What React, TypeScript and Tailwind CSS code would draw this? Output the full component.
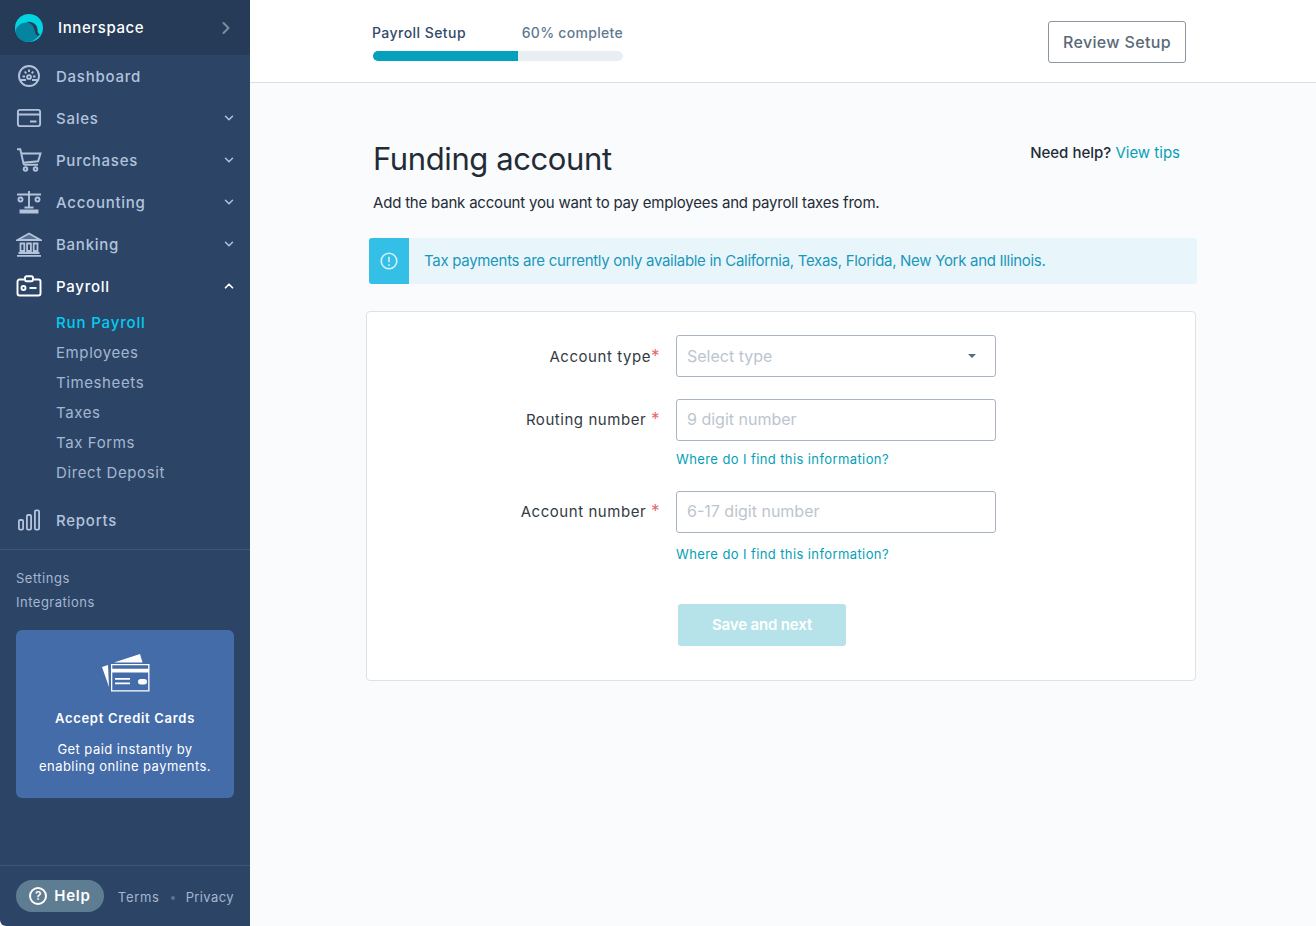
import { ChevronDown, ChevronRight, ChevronUp } from "lucide-react";
import type { ReactNode } from "react";

const DashboardIcon = () => (
  <svg width="26" height="26" viewBox="0 0 26 26" fill="none" stroke="currentColor" strokeWidth="1.9">
    <circle cx="13" cy="13" r="10" />
    <circle cx="13" cy="14" r="1.9" />
    <path d="M13 6.500v2.500M8.800 8.500l1.400 1.800M17.200 8.500l-1.400 1.800M6.500 13.500h2.500M17 13.500h2.500M4.500 17h5.500M16 17h5.500" />
  </svg>
);

const SalesIcon = () => (
  <svg width="26" height="22" viewBox="0 0 26 22" fill="none" stroke="currentColor" strokeWidth="1.9">
    <rect x="1.900" y="2.900" width="22.200" height="16.200" rx="2" />
    <path d="M2 7.500h22M14 14.500h6.500" />
  </svg>
);

const CartIcon = () => (
  <svg width="26" height="24" viewBox="0 0 26 24" fill="none" stroke="currentColor" strokeWidth="1.9">
    <path d="M1 1.200h3.300L7.500 15.500c.2 1 .8 1.300 1.500 1.300h13" />
    <path d="M5 5.500h19.500l-2.400 7.800-15 1.400" />
    <circle cx="9.500" cy="21" r="1.800" />
    <circle cx="19.500" cy="21" r="1.800" />
  </svg>
);

const ScaleIcon = () => (
  <svg width="26" height="24" viewBox="0 0 26 24" fill="none" stroke="currentColor" strokeWidth="1.9">
    <path d="M1 4.500h24M13 1v17M8.500 17.500h9M4.500 22.500V20.500h17v2z" />
    <circle cx="4.500" cy="9.500" r="2" />
    <circle cx="21.500" cy="9.500" r="2" />
  </svg>
);

const BankIcon = () => (
  <svg width="26" height="25" viewBox="0 0 26 25" fill="none" stroke="currentColor" strokeWidth="1.800">
    <path d="M1.500 8 13 1.500 24.500 8z" fill="currentColor" fillOpacity="0.35" />
    <path d="M4.500 11.500h3.800v7.500H4.500zM11.100 11.500h3.800v7.500h-3.800zM17.700 11.500h3.800v7.500h-3.800z" />
    <path d="M2.500 21h21M1 23.800h24" />
  </svg>
);

const PayrollIcon = () => (
  <svg width="26" height="22" viewBox="0 0 26 22" fill="none" stroke="currentColor" strokeWidth="1.9">
    <path d="M8.500 4.500H3.500a2 2 0 0 0-2 2v12a2 2 0 0 0 2 2h19a2 2 0 0 0 2-2v-12a2 2 0 0 0-2-2H17.500" />
    <rect x="9" y="1.200" width="8" height="5" rx="1.600" />
    <circle cx="7.500" cy="13" r="2" />
    <path d="M13.500 13h7" />
  </svg>
);

const ReportsIcon = () => (
  <svg width="24" height="22" viewBox="0 0 24 22" fill="none" stroke="currentColor" strokeWidth="1.800">
    <rect x="1.900" y="11" width="4.200" height="9.600" rx="1.200" />
    <rect x="9.900" y="6" width="4.200" height="14.600" rx="1.200" />
    <rect x="17.900" y="1.400" width="4.200" height="19.200" rx="1.200" />
  </svg>
);

const Logo = () => (
  <svg width="28" height="28" viewBox="0 0 28 28">
    <circle cx="14" cy="14" r="14" fill="#02d3e0" />
    <path d="M12 8C18 7 22.500 11 22.500 16c0 2 .8 3.500 2.500 4.500L21 24 17 14z" fill="#263b57" />
    <path d="M0.500 17C2 11 7.500 8 12 8.500c4 .5 7 3.500 7.500 7.500.3 3 1.500 5 3.500 6-2.500 3.500-6 6-9 6C6 28 1 23 .5 17z" fill="#04849f" />
  </svg>
);

const CardsIcon = () => (
  <svg width="49" height="38" viewBox="0 0 49 38" fill="#fff">
    <path d="M1 13 7 11 8 33z" />
    <path d="M13 8.500 39 0l2.500 8.500z" />
    <path fillRule="evenodd" d="M10 10h38.500v27.500H10zM11.300 11.300v3.500h35.900v-3.500zM11.300 18.500v17.700h35.900V18.500z" />
    <path d="M14 24h15v1.700H14zM14 28.500h15v1.700H14z" />
    <rect x="37" y="25" width="9" height="5.500" rx="2.750" />
  </svg>
);

type NavItemProps = {
  icon: ReactNode;
  label: string;
  chevron?: "down" | "up";
  active?: boolean;
  tracking?: string;
};

const NavItem = ({ icon, label, chevron, active }: NavItemProps) => (
  <div className={`flex items-center h-[42px] pl-4 pr-[14px] ${active ? "text-white" : "text-[#b3c3dc]"}`}>
    <div className="w-[26px] flex justify-center shrink-0">{icon}</div>
    <span className="ml-[14px] pt-[2px] text-[15px] font-medium tracking-[0.75px] flex-1">{label}</span>
    {chevron === "down" && <ChevronDown size={14} strokeWidth={2.5} />}
    {chevron === "up" && <ChevronUp size={14} strokeWidth={3} />}
  </div>
);

const subItems = ["Employees", "Timesheets", "Taxes", "Tax Forms", "Direct Deposit"];

const Sidebar = () => (
  <aside className="w-[250px] shrink-0 h-full bg-[#2c4567] flex flex-col rounded-bl-md">
    <div className="h-[55px] bg-[#263b57] flex items-center pl-[15px] pr-[14px] shrink-0">
      <Logo />
      <span className="ml-[15px] pt-[2px] text-[15px] font-medium tracking-[0.6px] text-white flex-1">Innerspace</span>
      <ChevronRight size={20} strokeWidth={2.5} className="text-[#7b8ba0]" />
    </div>
    <nav>
      <NavItem icon={<DashboardIcon />} label="Dashboard" />
      <NavItem icon={<SalesIcon />} label="Sales" chevron="down" />
      <NavItem icon={<CartIcon />} label="Purchases" chevron="down" />
      <NavItem icon={<ScaleIcon />} label="Accounting" chevron="down" />
      <NavItem icon={<BankIcon />} label="Banking" chevron="down" />
      <NavItem icon={<PayrollIcon />} label="Payroll" chevron="up" active />
      <div className="pl-[56px] text-[15px] tracking-[0.6px] text-[#a5b6d0]">
        <div className="h-[30px] pt-[2px] flex items-center font-medium tracking-[0.85px] text-[#00cdf2]">Run Payroll</div>
        {subItems.map((item) => (
          <div key={item} className="h-[30px] pt-[2px] flex items-center">{item}</div>
        ))}
      </div>
      <div className="mt-3">
        <NavItem icon={<ReportsIcon />} label="Reports" />
      </div>
    </nav>
    <div className="mt-2 border-t border-[#3f5876] pt-4 px-4 text-[13px] tracking-[0.5px] text-[#a5b6d0]">
      <div className="h-6 pt-[2px] flex items-center">Settings</div>
      <div className="h-6 pt-[2px] flex items-center">Integrations</div>
    </div>
    <div className="mx-4 mt-4 h-[168px] rounded-md bg-[#446ca9] flex flex-col items-center pt-6 text-white text-center">
      <CardsIcon />
      <div className="mt-[17px] text-[13px] font-semibold tracking-[0.7px]">Accept Credit Cards</div>
      <div className="mt-[12px] text-[13px] leading-[17px] tracking-[0.45px]">
        Get paid instantly by
        <br />
        enabling online payments.
      </div>
    </div>
    <div className="mt-auto h-[61px] border-t border-[#3f5876] flex items-center px-4">
      <div className="h-8 w-[88px] rounded-full bg-[#5f7d92] flex items-center justify-center gap-[7px] text-white">
        <span className="w-[18px] h-[18px] rounded-full border-2 border-white flex items-center justify-center text-[12px] font-semibold">?</span>
        <span className="text-[15px] font-semibold tracking-[0.8px]">Help</span>
      </div>
      <div className="ml-auto pt-[3px] flex items-center text-[13px] tracking-[0.7px] text-[#a5b6d0]">
        <span>Terms</span>
        <span className="w-1 h-1 rounded-full bg-[#5b7290] mx-[11px]" />
        <span className="tracking-[0.4px]">Privacy</span>
      </div>
    </div>
  </aside>
);

type FieldProps = {
  label: string;
  placeholder: string;
  star: string;
  select?: boolean;
};

const Field = ({ label, placeholder, select, star }: FieldProps) => (
  <div className="flex items-center">
    <div className={`w-[293px] text-right text-[15px] tracking-[0.55px] text-[#333a42] ${select ? "pt-[2px]" : ""}`}>
      {label}
      <span className="text-[17px] leading-none text-[#e06a6a]">{star}</span>
    </div>
    <div className="ml-4 w-[320px] h-[42px] border border-[#a9b5c2] rounded-[3px] bg-white flex items-center justify-between pl-[10px] pr-[19px] text-[16px] text-[#bcc5cf]">
      <span className={select ? "" : "pb-[2px]"}>{placeholder}</span>
      {select && <span className="w-0 h-0 border-x-[4px] border-x-transparent border-t-[4px] border-t-[#5b6b7c]" />}
    </div>
  </div>
);

const HelpLink = () => (
  <div className="ml-[309px] h-5 text-[13px] leading-5 tracking-[0.4px] text-[#04a0b8]">Where do I find this information?</div>
);

export default function App() {
  return (
    <div className="w-[1316px] h-[926px] flex overflow-hidden bg-white" style={{ fontFamily: "Inter, sans-serif" }}>
      <Sidebar />
      <main className="flex-1 h-full bg-[#fafbfd] flex flex-col">
        <header className="h-[83px] shrink-0 bg-white border-b border-[#dcdee1] flex items-center pl-[122px] pr-[130px] justify-between">
          <div className="w-[251px] mt-[1px]">
            <div className="flex justify-between text-[14px] font-medium leading-5 mb-[8px]">
              <span className="text-[#34496a] tracking-[0.45px]">Payroll Setup</span>
              <span className="text-[#60798f] tracking-[0.3px]">60% complete</span>
            </div>
            <div className="h-[10px] rounded-full bg-[#e9eef2] overflow-hidden ml-[1px]">
              <div className="h-full w-[58%] bg-[#04a0bc]" />
            </div>
          </div>
          <button className="w-[138px] h-[42px] mt-[1px] border border-[#8b96a1] rounded-[3px] bg-white text-[16px] font-medium tracking-[0.35px] text-[#5a6a79]">
            Review Setup
          </button>
        </header>
        <div className="ml-[116px] w-[831px]">
          <div className="ml-[7px] mt-[54px] flex justify-between items-start pr-[17px]">
            <h1 className="text-[31px] leading-[44px] tracking-[-0.4px] text-[#232c36]">Funding account</h1>
            <div className="text-[15px] leading-6 mt-[4px]">
              <span className="font-medium text-[#232c36]">Need help?</span>{" "}
              <span className="text-[#04a0b8]">View tips</span>
            </div>
          </div>
          <p className="ml-[7px] mt-[10px] text-[15px] leading-6 tracking-[-0.2px] text-[#232c36]">
            Add the bank account you want to pay employees and payroll taxes from.
          </p>
          <div className="ml-[3px] mt-[23px] w-[828px] h-[46px] rounded-[3px] bg-[#e8f6fc] flex items-center overflow-hidden">
            <div className="w-10 h-full bg-[#33bfe6] flex items-center justify-center shrink-0">
              <svg width="18" height="18" viewBox="0 0 18 18" fill="none" stroke="#d5f1fa" strokeWidth="1.600">
                <circle cx="9" cy="9" r="7.800" />
                <path d="M9 4.800v5.400M9 12.200v1.500" />
              </svg>
            </div>
            <span className="ml-[15px] text-[15px] tracking-[-0.3px] text-[#1b97b9]">
              Tax payments are currently only available in California, Texas, Florida, New York and Illinois.
            </span>
          </div>
          <section className="mt-[27px] h-[370px] w-[830px] border border-[#dfe2e5] rounded-[4px] bg-white pt-[23px] flex flex-col">
            <Field label="Account type" star="*" placeholder="Select type" select />
            <div className="mt-[22px]">
              <Field label="Routing number " star=" *" placeholder="9 digit number" />
            </div>
            <div className="mt-2">
              <HelpLink />
            </div>
            <div className="mt-[22px]">
              <Field label="Account number " star=" *" placeholder="6-17 digit number" />
            </div>
            <div className="mt-[11px]">
              <HelpLink />
            </div>
            <button className="ml-[311px] mt-[40px] w-[168px] h-[42px] rounded-[3px] bg-[#b5e3e9] text-white text-[15px] font-semibold tracking-[-0.15px]">
              Save and next
            </button>
          </section>
        </div>
      </main>
    </div>
  );
}
